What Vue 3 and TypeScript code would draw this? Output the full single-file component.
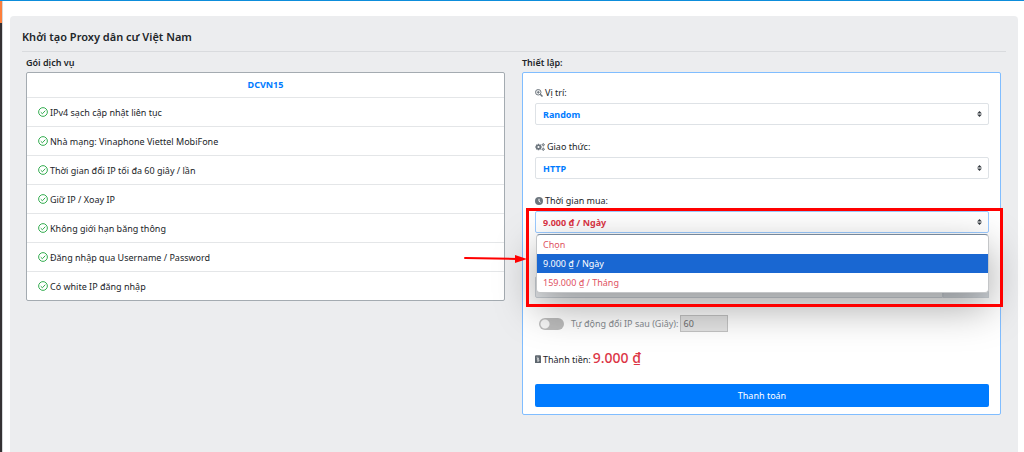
<script setup lang="ts">
import { ref } from 'vue'

const features: string[] = [
  'IPv4 sạch cập nhật liên tục',
  'Nhà mạng: Vinaphone Viettel MobiFone',
  'Thời gian đổi IP tối đa 60 giây / lần',
  'Giữ IP / Xoay IP',
  'Không giới hạn băng thông',
  'Đăng nhập qua Username / Password',
  'Có white IP đăng nhập',
]

interface Duration {
  value: string
  label: string
}

const durations: Duration[] = [
  { value: '', label: 'Chọn' },
  { value: 'day', label: '9.000 ₫ / Ngày' },
  { value: 'month', label: '159.000 ₫ / Tháng' },
]

const location = ref('Random')
const protocol = ref('HTTP')
const duration = ref('day')
const autoRotate = ref(false)
const rotateSeconds = ref('60')
const note = ref('')
</script>

<template>
  <div class="page">
    <aside class="rail"></aside>
    <main class="panel">
      <h1 class="title">Khởi tạo Proxy dân cư Việt Nam</h1>
      <div class="columns">
        <section class="column">
          <h2 class="heading">Gói dịch vụ</h2>
          <div class="card plan">
            <h3 class="plan-name">DCVN15</h3>
            <ul class="features">
              <li v-for="feature in features" :key="feature" class="feature">
                <svg class="check" viewBox="0 0 16 16" aria-hidden="true">
                  <circle cx="8" cy="8" r="7" />
                  <path d="M4.4 8.3 7 10.8 11.7 5.8" />
                </svg>
                <span>{{ feature }}</span>
              </li>
            </ul>
          </div>
        </section>

        <section class="column">
          <h2 class="heading">Thiết lập:</h2>
          <form class="card setup" @submit.prevent>
            <div class="field">
              <label class="label" for="location">
                <svg class="icon" viewBox="0 0 16 16" aria-hidden="true">
                  <circle cx="6.5" cy="6.5" r="5.5" fill="none" stroke="currentColor" stroke-width="2" />
                  <path d="M10.5 10.5 15 15" fill="none" stroke="currentColor" stroke-width="3" />
                  <path d="M6.5 3.500v6M3.500 6.500h6" fill="none" stroke="currentColor" stroke-width="2" />
                </svg>
                Vị trí:
              </label>
              <div class="picker">
                <select id="location" v-model="location" class="select">
                  <option>Random</option>
                </select>
                <svg class="caret" viewBox="0 0 4 5" aria-hidden="true"><path d="M2 0 0 2h4zm0 5L0 3h4z" /></svg>
              </div>
            </div>

            <div class="field">
              <label class="label" for="protocol">
                <svg class="icon wide" viewBox="0 0 20 16" aria-hidden="true">
                  <circle cx="7" cy="8" r="3.6" fill="none" stroke="currentColor" stroke-width="3" />
                  <path d="M7 1.5v3M7 11.500v3M.5 8h3M10.500 8h3M2.400 3.400l2 2M9.600 10.600l2 2M2.400 12.600l2-2M9.600 5.400l2-2" fill="none" stroke="currentColor" stroke-width="2.800" />
                  <circle cx="16.500" cy="3.500" r="1.700" fill="none" stroke="currentColor" stroke-width="2" />
                  <circle cx="16.500" cy="12.500" r="1.700" fill="none" stroke="currentColor" stroke-width="2" />
                  <path d="M16.500 0v1.500M16.500 5.500V7M13 3.500h1.500M18.500 3.500H20M16.500 9v1.500M16.500 14.500V16M13 12.500h1.500M18.500 12.500H20" stroke="currentColor" stroke-width="1.800" />
                </svg>
                Giao thức:
              </label>
              <div class="picker">
                <select id="protocol" v-model="protocol" class="select">
                  <option>HTTP</option>
                </select>
                <svg class="caret" viewBox="0 0 4 5" aria-hidden="true"><path d="M2 0 0 2h4zm0 5L0 3h4z" /></svg>
              </div>
            </div>

            <div class="field">
              <label class="label" for="duration">
                <svg class="icon" viewBox="0 0 16 16" aria-hidden="true">
                  <circle cx="8" cy="8" r="8" fill="currentColor" />
                  <path d="M8 3.500V8.500l3 2" fill="none" stroke="#fff" stroke-width="2" />
                </svg>
                Thời gian mua:
              </label>
              <div class="picker">
                <select id="duration" v-model="duration" class="select price focused">
                  <option v-for="item in durations" :key="item.value" :value="item.value">{{ item.label }}</option>
                </select>
                <svg class="caret" viewBox="0 0 4 5" aria-hidden="true"><path d="M2 0 0 2h4zm0 5L0 3h4z" /></svg>
                <ul class="menu" role="listbox" aria-label="Thời gian mua">
                  <li
                    v-for="item in durations"
                    :key="item.value"
                    class="option"
                    :class="{ active: item.value === duration }"
                    role="option"
                    :aria-selected="item.value === duration"
                    @click="duration = item.value"
                  >
                    {{ item.label }}
                  </li>
                </ul>
                <div class="marker">
                  <svg class="arrow" viewBox="0 0 63 10" aria-hidden="true">
                    <path d="M1 4 53 5" fill="none" stroke="#f00" stroke-width="2" stroke-linecap="round" />
                    <path d="M51 1 63 5 51 9z" fill="#f00" />
                  </svg>
                </div>
              </div>
            </div>

            <div class="group">
              <input v-model="note" class="group-input" type="text" aria-label="IP" disabled />
              <button class="group-button" type="button" aria-label="IP" disabled></button>
            </div>

            <div class="rotate">
              <input id="auto" v-model="autoRotate" class="switch" type="checkbox" />
              <label for="auto">Tự động đổi IP sau (Giây):</label>
              <input v-model="rotateSeconds" class="seconds" type="text" aria-label="Giây" disabled />
            </div>

            <p class="total">
              <svg class="bill" viewBox="0 0 12 16" aria-hidden="true">
                <path d="M0 1h3V0h2v1h2V0h2v1h3v15H0z" fill="currentColor" />
                <path d="M3 4.500h4M8 7H4.500v2.500H8V12H4M6 6v7.500" fill="none" stroke="#fff" stroke-width="1" />
              </svg>
              <span>Thành tiền:</span>
              <strong class="amount">9.000 ₫</strong>
            </p>

            <button class="pay" type="submit">Thanh toán</button>
          </form>
        </section>
      </div>
    </main>
  </div>
</template>

<style>
body {
  background: #fff;
}
</style>

<style scoped>
* {
  box-sizing: border-box;
}

.page {
  display: flex;
  min-height: 100vh;
  border-top: 1px solid #0d8ddb;
  color: #212529;
  font: 9px/15px 'Noto Sans', 'Open Sans', sans-serif;
}

.rail {
  flex: none;
  width: 3px;
  border-right: 1px solid #d5d8da;
  background: linear-gradient(#fd7e3b 22px, #343033 22px);
}

.panel {
  flex: 1;
  margin: 15px 6px 0 7px;
  padding: 12px;
  border-radius: 4px 4px 0 0;
  background: #ecedef;
}

.title {
  margin: 0 0 3px;
  padding-bottom: 5px;
  border-bottom: 1px solid #d9dbde;
  font-size: 11px;
  line-height: 18px;
  font-weight: 600;
}

.columns {
  display: grid;
  grid-template-columns: 1fr 1fr;
  gap: 17px;
  padding: 0 5px 0 4px;
  align-items: start;
}

.heading {
  margin: 0 0 2px;
  font-size: 9px;
  line-height: 15px;
  font-weight: 600;
}

.card {
  border: 1px solid #a4abb1;
  border-radius: 2px;
  background: #fff;
}

.plan-name {
  margin: 0;
  color: #007bff;
  font-size: 9px;
  line-height: 24px;
  font-weight: 700;
  text-align: center;
}

.features {
  margin: 0;
  padding: 0;
  list-style: none;
}

.feature {
  display: flex;
  align-items: center;
  gap: 2px;
  height: 29px;
  padding-left: 11px;
  border-top: 1px solid #e4e6e8;
}

.check {
  width: 10px;
  height: 10px;
  fill: none;
  stroke: #28a745;
  stroke-width: 1.5;
}

.setup {
  padding: 12px 11px 7px 12px;
  border-color: #80bdff;
}

.field {
  margin-bottom: 14px;
}

.label {
  display: flex;
  align-items: center;
  gap: 2px;
  height: 15px;
  margin-bottom: 3px;
}

.icon {
  width: 8px;
  height: 8px;
  color: #6c757d;
}

.wide {
  width: 10px;
}

.picker {
  position: relative;
}

.select {
  display: block;
  width: 100%;
  height: 22px;
  padding: 0 7px;
  border: 1px solid #dee2e6;
  border-radius: 2px;
  outline: none;
  background: #fff;
  color: #007bff;
  font: inherit;
  font-weight: 700;
  appearance: none;
}

.price {
  color: #dc3545;
}

.focused {
  border-color: #9bcaff;
}

.caret {
  position: absolute;
  top: 8px;
  right: 7px;
  width: 5px;
  height: 6px;
  fill: #343a40;
  pointer-events: none;
}

.menu {
  position: absolute;
  z-index: 1;
  top: calc(100% + 1px);
  left: 1px;
  right: 0;
  margin: 0;
  padding: 0;
  border: 1px solid #c4c6c8;
  border-top-color: #76889b;
  border-radius: 4px;
  background: #fff;
  box-shadow: 0 14px 40px rgba(0, 0, 0, 0.36);
  list-style: none;
}

.option {
  padding: 0 6px;
  color: #e0525f;
  line-height: 19px;
}

.option.active {
  background: #1967d2;
  color: #fff;
}

.marker {
  position: absolute;
  z-index: 2;
  top: -3px;
  left: -9px;
  right: -14px;
  height: 99px;
  border: 3px solid #f00;
  pointer-events: none;
}

.arrow {
  position: absolute;
  top: 43px;
  right: calc(100% + 2px);
  width: 63px;
  height: 10px;
}

.group {
  display: flex;
  margin-top: 43px;
}

.group-input {
  flex: 1;
  height: 22px;
  border: 1px solid #ced4da;
  border-radius: 2px 0 0 2px;
  background: #e9ecef;
}

.group-button {
  width: 46px;
  border: 1px solid #ced4da;
  background: #d5dadf;
}

.rotate {
  display: flex;
  align-items: center;
  height: 17px;
  margin: 17px 0 0 4px;
  color: #868b90;
}

.switch {
  width: 25px;
  height: 12px;
  margin: 0 7px 0 0;
  border-radius: 6px;
  background: radial-gradient(circle at 6px 6px, #f6f6f6 4px, #bcbcbc 5px);
  appearance: none;
}

.seconds {
  width: 48px;
  height: 17px;
  margin-left: 2px;
  padding: 0 2px;
  border: 1px solid #c3c3c3;
  background: #e3e3e3;
  color: #6d6d6d;
  font: inherit;
}

.total {
  display: flex;
  align-items: baseline;
  gap: 2px;
  margin: 16px 0 14px;
  line-height: 20px;
}

.bill {
  width: 6px;
  height: 8px;
  color: #5d666e;
}

.amount {
  color: #dc3545;
  font-size: 14px;
  font-weight: 500;
}

.pay {
  display: block;
  width: 100%;
  height: 23px;
  padding: 0;
  border: 0;
  border-radius: 2px;
  background: #007bff;
  color: #fff;
  font: inherit;
}
</style>
